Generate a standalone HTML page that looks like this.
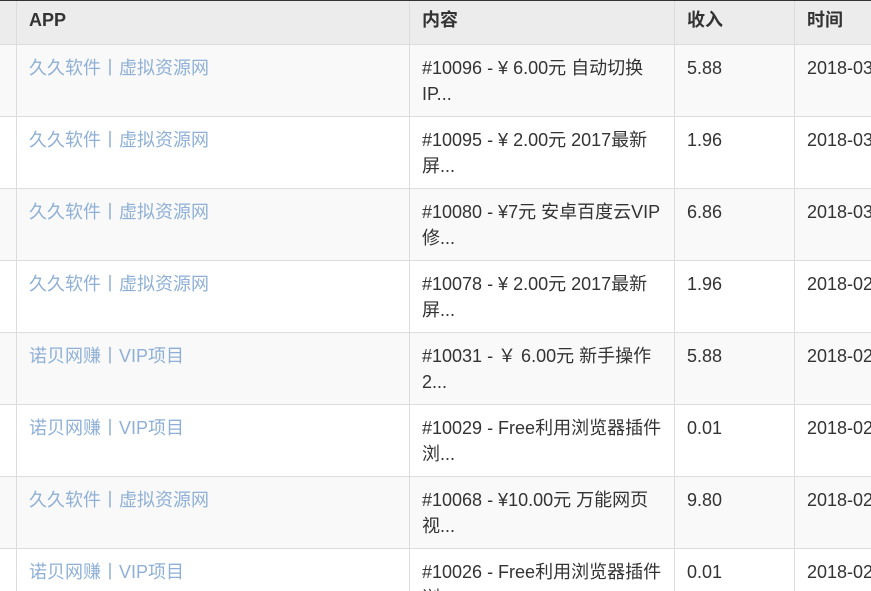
<!DOCTYPE html>
<html><head><meta charset="utf-8"><style>
html,body{margin:0;padding:0;width:871px;height:591px;overflow:hidden;background:#fff;}
body{font-family:"Liberation Sans","Noto Sans CJK SC",sans-serif;font-size:18px;color:#333;position:relative;}
.topline{position:absolute;left:0;top:0;width:871px;height:1px;background:#333;z-index:5}
.wrap{position:absolute;left:0;top:0;width:871px;height:591px;overflow:hidden;}
table{position:absolute;left:-1px;top:0;border-collapse:collapse;table-layout:fixed;width:1000px;}
td,th{border:1px solid #dddddd;padding:0 12px;vertical-align:top;text-align:left;white-space:nowrap;overflow:hidden;}
th{height:44px;box-sizing:border-box;background:#ececec;font-weight:bold;line-height:38px;color:#333;}
td{height:72px;line-height:26px;padding-top:10px;padding-bottom:0;box-sizing:border-box;}
tr.odd td{background:#f9f9f9;}
a{color:#8fb0d6;text-decoration:none;}
</style></head><body>
<div class="topline"></div>
<div class="wrap">
<table>
<colgroup><col style="width:17px"><col style="width:393px"><col style="width:265px"><col style="width:120px"><col style="width:205px"></colgroup>
<tr><th></th><th>APP</th><th>内容</th><th>收入</th><th>时间</th></tr>
<tr class="odd"><td></td><td><a>久久软件丨虚拟资源网</a></td><td>#10096 - ¥ 6.00元 自动切换<br>IP...</td><td>5.88</td><td>2018-03-01</td></tr>
<tr><td></td><td><a>久久软件丨虚拟资源网</a></td><td>#10095 - ¥ 2.00元 2017最新<br>屏...</td><td>1.96</td><td>2018-03-01</td></tr>
<tr class="odd"><td></td><td><a>久久软件丨虚拟资源网</a></td><td>#10080 - ¥7元 安卓百度云VIP<br>修...</td><td>6.86</td><td>2018-03-01</td></tr>
<tr><td></td><td><a>久久软件丨虚拟资源网</a></td><td>#10078 - ¥ 2.00元 2017最新<br>屏...</td><td>1.96</td><td>2018-02-28</td></tr>
<tr class="odd"><td></td><td><a>诺贝网赚丨VIP项目</a></td><td>#10031 - ￥ 6.00元 新手操作<br>2...</td><td>5.88</td><td>2018-02-28</td></tr>
<tr><td></td><td><a>诺贝网赚丨VIP项目</a></td><td>#10029 - Free利用浏览器插件<br>浏...</td><td>0.01</td><td>2018-02-28</td></tr>
<tr class="odd"><td></td><td><a>久久软件丨虚拟资源网</a></td><td>#10068 - ¥10.00元 万能网页<br>视...</td><td>9.80</td><td>2018-02-28</td></tr>
<tr><td></td><td><a>诺贝网赚丨VIP项目</a></td><td>#10026 - Free利用浏览器插件<br>浏...</td><td>0.01</td><td>2018-02-28</td></tr>
</table>
</div>
</body></html>
